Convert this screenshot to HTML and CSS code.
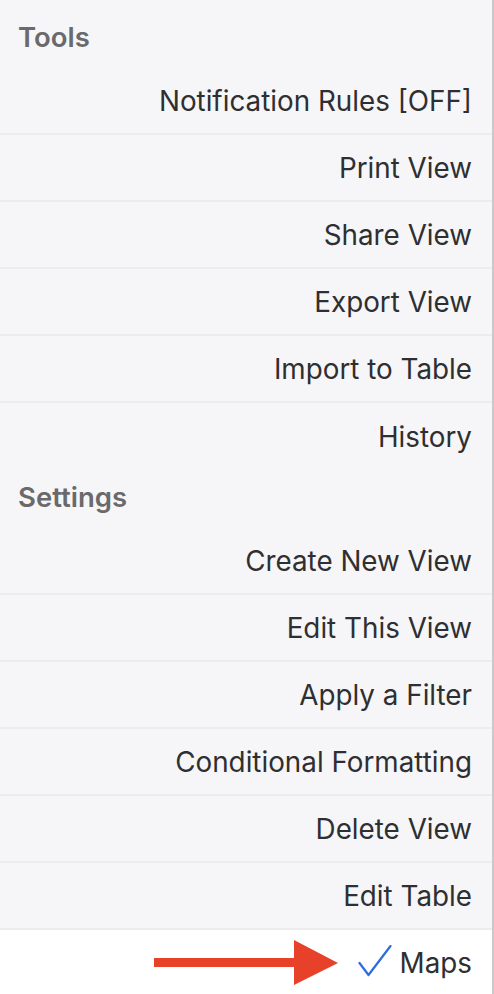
FILE: index.html
```html
<!DOCTYPE html>
<html>
<head>
<meta charset="utf-8">
<link rel="stylesheet" href="styles.css">
</head>
<body>
<div class="panel">
  <div class="section-title">Tools</div>
  <div class="row">Notification Rules [OFF]</div>
  <div class="row">Print View</div>
  <div class="row">Share View</div>
  <div class="row">Export View</div>
  <div class="row">Import to Table</div>
  <div class="row last">History</div>
  <div class="section-title">Settings</div>
  <div class="row">Create New View</div>
  <div class="row">Edit This View</div>
  <div class="row">Apply a Filter</div>
  <div class="row">Conditional Formatting</div>
  <div class="row">Delete View</div>
  <div class="row">Edit Table</div>
  <div class="row selected">
    <svg class="arrow" width="190" height="50" viewBox="0 0 190 50">
      <rect x="0" y="18" width="142" height="9" fill="#e8412a"/>
      <polygon points="140,0 184,23 140,45" fill="#e8412a"/>
    </svg>
    <svg class="check" width="34" height="32" viewBox="0 0 34 32">
      <polyline points="1.5,18 10.5,30 32.5,1" fill="none" stroke="#2c6de0" stroke-width="2.2" stroke-linecap="round" stroke-linejoin="round"/>
    </svg>
    <span>Maps</span>
  </div>
</div>
</body>
</html>
```

FILE: styles.css
```css
html, body {
  margin: 0;
  padding: 0;
  background: #ffffff;
}
body {
  font-family: Inter, "Noto Sans", sans-serif;
  width: 494px;
  height: 994px;
  overflow: hidden;
}
.panel {
  width: 492px;
  border-right: 2px solid #c9c9cc;
  background: #f6f6f8;
  padding-top: 10px;
  min-height: 984px;
}
.section-title {
  height: 58px;
  display: flex;
  align-items: center;
  padding-left: 18px;
  padding-bottom: 4px;
  font-size: 27.5px;
  font-weight: 600;
  color: #6a6a6c;
  box-sizing: border-box;
}
.row {
  height: 67px;
  box-sizing: border-box;
  border-bottom: 2px solid #ececee;
  display: flex;
  align-items: center;
  justify-content: flex-end;
  padding-right: 20px;
  font-size: 27.8px;
  color: #2f2f31;
}
.row.last {
  border-bottom: none;
}
.row.selected {
  background: #ffffff;
  border-bottom: none;
  position: relative;
  height: 66px;
  gap: 8px;
}
.arrow {
  position: absolute;
  left: 154px;
  top: 10px;
}
.check {
  display: block;
  margin-top: -4px;
}
```
